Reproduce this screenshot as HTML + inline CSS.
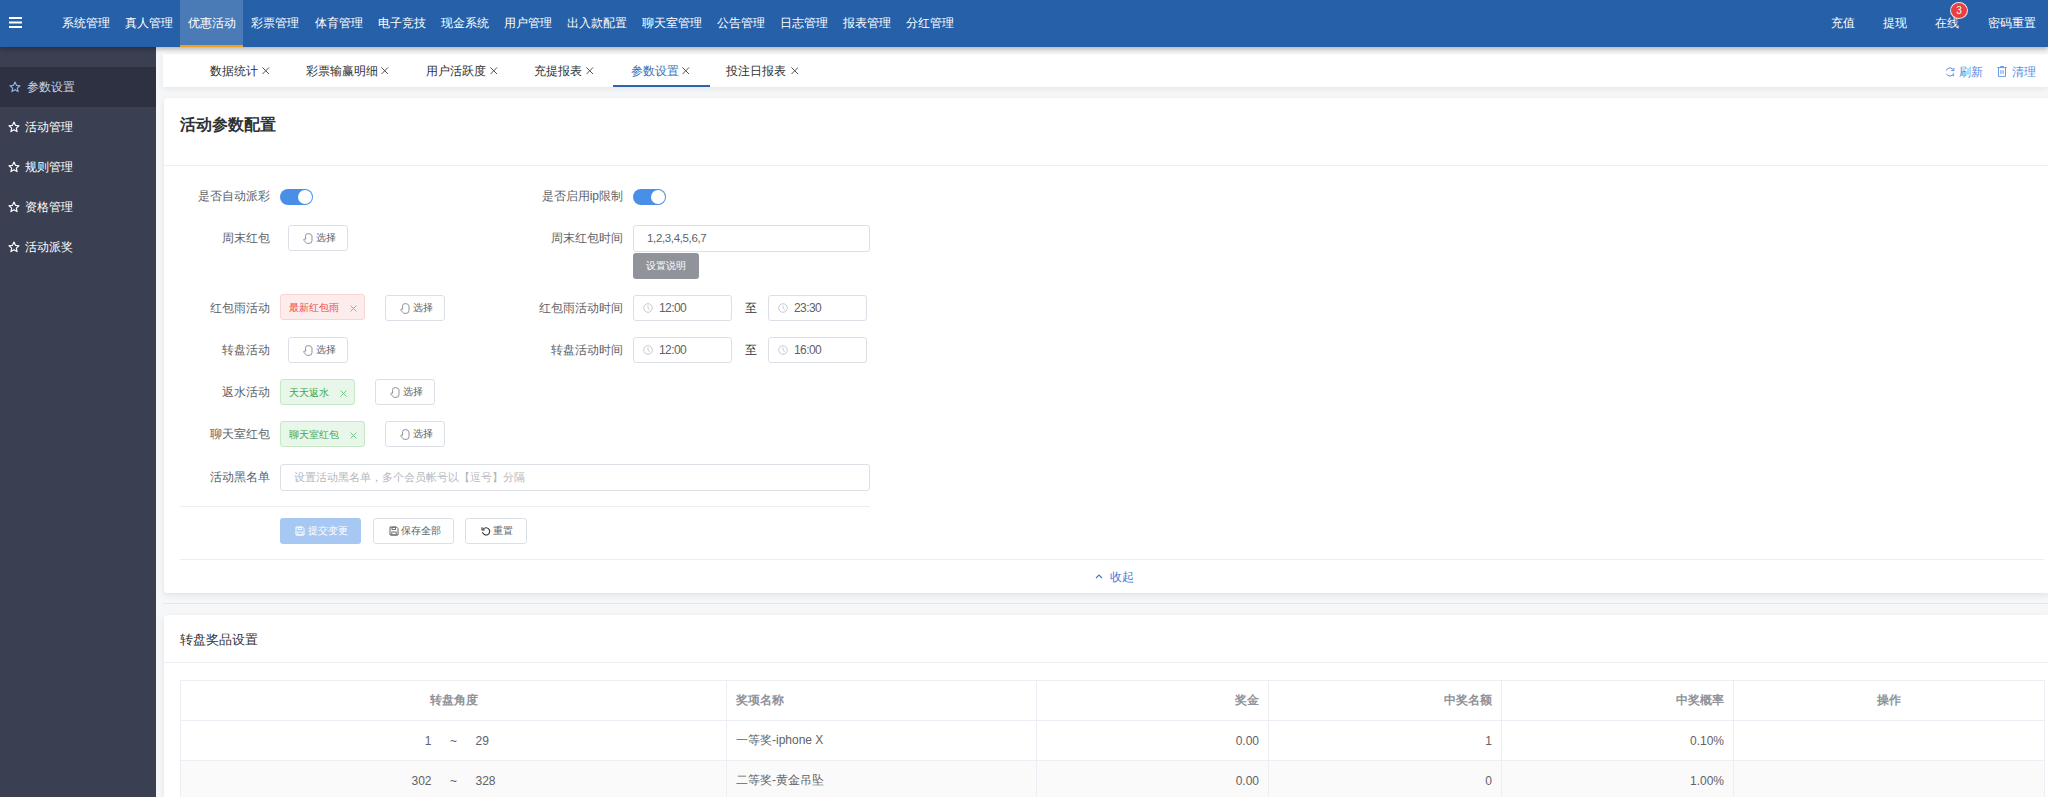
<!DOCTYPE html>
<html><head><meta charset="utf-8">
<style>
*{box-sizing:border-box;margin:0;padding:0}
i{font-style:normal;position:absolute;line-height:0}
i svg{display:block}
html,body{width:2048px;height:797px;overflow:hidden}
body{font-family:"Liberation Sans",sans-serif;font-size:12px;color:#606266;background:#f6f7f9;position:relative}
.abs{position:absolute}
#hdr{left:0;top:0;width:2048px;height:47px;background:#2660a9;box-shadow:0 2px 5px rgba(0,0,0,.3);z-index:5}
.nav{position:absolute;top:16px;line-height:14px;color:#fff;font-size:12px;white-space:nowrap}
#side{left:0;top:47px;width:156px;height:750px;background:#3a3f51;z-index:4}
.mi{position:absolute;left:0;width:156px;height:40px;color:#fff;font-size:12px}
.mi.act{background:#2d3142;color:#c8d3e6}
.mi span{position:absolute;top:13px;line-height:14px;white-space:nowrap}
#tabs{left:163px;top:54px;width:1885px;height:33px;background:#fff;box-shadow:0 2px 6px rgba(0,0,0,.07)}
.tabt{position:absolute;top:64px;line-height:14px;font-size:12px;white-space:nowrap}
.card{position:absolute;left:164px;width:1884px;background:#fff;border-radius:4px 0 0 4px;box-shadow:0 2px 6px rgba(0,0,0,.09)}
.lbl{position:absolute;color:#606266;font-size:12px;white-space:nowrap;line-height:14px}
.sw{position:absolute;width:33px;height:16px;border-radius:8px;background:#4a8fe7}
.sw:after{content:"";position:absolute;right:1px;top:1px;width:14px;height:14px;border-radius:50%;background:#fff}
.btn{position:absolute;height:26px;border:1px solid #dcdfe6;border-radius:3px;background:#fff;color:#606266;font-size:10px;line-height:24px;white-space:nowrap}
.btn span{position:absolute;top:0}
.inp{position:absolute;height:27px;border:1px solid #dcdfe6;border-radius:3px;background:#fff;color:#606266;font-size:12px;line-height:25px;white-space:nowrap}
.inp span{position:absolute;top:0;letter-spacing:-0.6px}
.tag{position:absolute;height:26px;border-radius:3px;font-size:10px;line-height:24px;white-space:nowrap}
.tag.red{background:#fdecec;border:1px solid #fbd3d3;color:#ef4a4a}
.tag.grn{background:#e9f6ea;border:1px solid #c6e8c6;color:#3ca64e}
.tag span,.tag svg{position:absolute}
.hline{position:absolute;height:1px;background:#ebeef5}
table{border-collapse:collapse;position:absolute;left:180px;top:680px;width:1865px;font-size:12px;color:#606266;table-layout:fixed}
td,th{border:1px solid #ebeef5;height:40px;padding:0 9px;white-space:nowrap}
th{font-weight:bold;color:#909399}
tr.st td{background:#fafafa}
.r1{display:inline-block;width:40px;text-align:right}
.tl{display:inline-block;width:44px;text-align:center}
.r2{display:inline-block;width:40px;text-align:left}
</style></head><body>
<div id="hdr" class="abs">
<svg class="abs" style="left:9px;top:17px" width="13" height="11" viewBox="0 0 13 11"><rect x="0" y="0" width="13" height="2" fill="#fff"/><rect x="0" y="4.5" width="13" height="2" fill="#fff"/><rect x="0" y="9" width="13" height="2" fill="#fff"/></svg>
<div class="abs" style="left:180px;top:0;width:63px;height:47px;background:#4a7bb7;border-bottom:2px solid #f0a020"></div>
<div class="nav" style="left:62.4px">系统管理</div><div class="nav" style="left:125.2px">真人管理</div><div class="nav" style="left:188.1px">优惠活动</div><div class="nav" style="left:251.4px">彩票管理</div><div class="nav" style="left:314.6px">体育管理</div><div class="nav" style="left:377.6px">电子竞技</div><div class="nav" style="left:440.8px">现金系统</div><div class="nav" style="left:503.7px">用户管理</div><div class="nav" style="left:567.1px">出入款配置</div><div class="nav" style="left:641.6px">聊天室管理</div><div class="nav" style="left:716.8px">公告管理</div><div class="nav" style="left:780.3px">日志管理</div><div class="nav" style="left:843.0px">报表管理</div><div class="nav" style="left:905.8px">分红管理</div>
<div class="nav" style="left:1831px">充值</div>
<div class="nav" style="left:1883px">提现</div>
<div class="nav" style="left:1935px">在线</div>
<div class="abs" style="left:1950px;top:2px;width:18px;height:17px;border-radius:50%;background:#e8403f;border:1px solid rgba(255,255,255,.85);color:#fff;font-size:10px;line-height:15px;text-align:center">3</div>
<div class="nav" style="left:1987.5px">密码重置</div>
</div>
<div id="side" class="abs"><div class="mi act" style="top:20px"><svg class="abs" style="left:9.3px;top:14px" width="12" height="12" viewBox="0 0 24 24"><path d="M12 2.2l2.9 6.5 7.1.7-5.4 4.8 1.6 7-6.2-3.7-6.2 3.7 1.6-7L2 9.4l7.1-.7z" fill="none" stroke="#8fb4e6" stroke-width="2.3" stroke-linejoin="round"/></svg><span style="left:27px">参数设置</span></div><div class="mi" style="top:60px"><svg class="abs" style="left:8.3px;top:14px" width="12" height="12" viewBox="0 0 24 24"><path d="M12 2.2l2.9 6.5 7.1.7-5.4 4.8 1.6 7-6.2-3.7-6.2 3.7 1.6-7L2 9.4l7.1-.7z" fill="none" stroke="#fff" stroke-width="2.3" stroke-linejoin="round"/></svg><span style="left:25px">活动管理</span></div><div class="mi" style="top:100px"><svg class="abs" style="left:8.3px;top:14px" width="12" height="12" viewBox="0 0 24 24"><path d="M12 2.2l2.9 6.5 7.1.7-5.4 4.8 1.6 7-6.2-3.7-6.2 3.7 1.6-7L2 9.4l7.1-.7z" fill="none" stroke="#fff" stroke-width="2.3" stroke-linejoin="round"/></svg><span style="left:25px">规则管理</span></div><div class="mi" style="top:140px"><svg class="abs" style="left:8.3px;top:14px" width="12" height="12" viewBox="0 0 24 24"><path d="M12 2.2l2.9 6.5 7.1.7-5.4 4.8 1.6 7-6.2-3.7-6.2 3.7 1.6-7L2 9.4l7.1-.7z" fill="none" stroke="#fff" stroke-width="2.3" stroke-linejoin="round"/></svg><span style="left:25px">资格管理</span></div><div class="mi" style="top:180px"><svg class="abs" style="left:8.3px;top:14px" width="12" height="12" viewBox="0 0 24 24"><path d="M12 2.2l2.9 6.5 7.1.7-5.4 4.8 1.6 7-6.2-3.7-6.2 3.7 1.6-7L2 9.4l7.1-.7z" fill="none" stroke="#fff" stroke-width="2.3" stroke-linejoin="round"/></svg><span style="left:25px">活动派奖</span></div></div>
<div id="tabs" class="abs"></div>
<div class="tabt" style="left:209.7px;color:#303133">数据统计</div><svg class="abs" style="left:262px;top:66.5px" width="7.5" height="7.5" viewBox="0 0 8 8"><path d="M0.4 0.4L7.6 7.6M7.6 0.4L0.4 7.6" stroke="#444" stroke-width="1"/></svg><div class="tabt" style="left:305.6px;color:#303133">彩票输赢明细</div><svg class="abs" style="left:381.4px;top:66.5px" width="7.5" height="7.5" viewBox="0 0 8 8"><path d="M0.4 0.4L7.6 7.6M7.6 0.4L0.4 7.6" stroke="#444" stroke-width="1"/></svg><div class="tabt" style="left:425.6px;color:#303133">用户活跃度</div><svg class="abs" style="left:490px;top:66.5px" width="7.5" height="7.5" viewBox="0 0 8 8"><path d="M0.4 0.4L7.6 7.6M7.6 0.4L0.4 7.6" stroke="#444" stroke-width="1"/></svg><div class="tabt" style="left:533.8px;color:#303133">充提报表</div><svg class="abs" style="left:586px;top:66.5px" width="7.5" height="7.5" viewBox="0 0 8 8"><path d="M0.4 0.4L7.6 7.6M7.6 0.4L0.4 7.6" stroke="#444" stroke-width="1"/></svg><div class="tabt" style="left:630.6px;color:#3b6fb6">参数设置</div><svg class="abs" style="left:682.2px;top:66.5px" width="7.5" height="7.5" viewBox="0 0 8 8"><path d="M0.4 0.4L7.6 7.6M7.6 0.4L0.4 7.6" stroke="#444" stroke-width="1"/></svg><div class="tabt" style="left:726.2px;color:#303133">投注日报表</div><svg class="abs" style="left:790.7px;top:66.5px" width="7.5" height="7.5" viewBox="0 0 8 8"><path d="M0.4 0.4L7.6 7.6M7.6 0.4L0.4 7.6" stroke="#444" stroke-width="1"/></svg><div class="abs" style="left:613px;top:85px;width:97px;height:2px;background:#2e63ad"></div>
<div class="abs" style="left:1944px;top:65px;color:#5a8de6;font-size:12px;line-height:14px;white-space:nowrap"><svg class="abs" style="left:1px;top:1.5px" width="10" height="10" viewBox="0 0 10 10"><path d="M1.2 3.6A4 4 0 0 1 8.6 3.2M8.8 6.2A4 4 0 0 1 1.4 6.8" fill="none" stroke="#5a8de6" stroke-width="1"/><path d="M8.9 0.9V3.6H6.2" fill="none" stroke="#5a8de6" stroke-width="1"/><path d="M7.2 8.6L9.3 7.6L9 9.6Z" fill="#5a8de6"/></svg><span class="abs" style="left:15px;top:0">刷新</span>
<svg class="abs" style="left:53px;top:1px" width="10" height="11" viewBox="0 0 10 11"><path d="M0.3 1.6H9.7M3.6 1.6V0.5H6.4V1.6M1.5 1.6V10.4H8.5V1.6M3.9 4V8M6.1 4V8" fill="none" stroke="#5a8de6" stroke-width="0.9"/></svg><span class="abs" style="left:68px;top:0">清理</span></div>

<div class="card" style="top:98px;height:495px"></div>
<div class="abs" style="left:180px;top:116px;font-size:16px;font-weight:bold;color:#303133;line-height:18px;white-space:nowrap">活动参数配置</div>
<div class="hline" style="left:163px;top:165px;width:1885px"></div>
<div class="lbl" style="right:1778px;top:189px">是否自动派彩</div><div class="sw" style="left:280px;top:189px"></div><div class="lbl" style="right:1425px;top:189px">是否启用ip限制</div><div class="sw" style="left:633px;top:189px"></div><div class="lbl" style="right:1778px;top:231px">周末红包</div><div class="btn" style="left:288px;top:225px;width:60px"><i style="left:14px;top:7px"><svg width="10" height="11" viewBox="0 0 10 11"><path d="M2.6 6.2V2.6Q2.6 0.6 5.2 0.6Q8.7 0.6 9 2.9V7.6Q9 10.4 6 10.4H4.9Q3.6 10.4 2.7 9.4L0.9 7.3Q0.4 6.5 1.1 6.1Q1.8 5.8 2.6 6.7" fill="none" stroke="#8a8c90" stroke-width="0.95" stroke-linejoin="round"/></svg></i><span style="left:27px">选择</span></div><div class="lbl" style="right:1425px;top:231px">周末红包时间</div><div class="inp" style="left:633px;top:225px;width:237px"><span style="left:13px;font-size:11.5px;letter-spacing:-0.35px">1,2,3,4,5,6,7</span></div><div class="abs" style="left:633px;top:253px;width:66px;height:26px;background:#909399;border-radius:3px;color:#fff;font-size:10px;line-height:26px;text-align:center">设置说明</div><div class="lbl" style="right:1778px;top:301px">红包雨活动</div><div class="tag red" style="left:280px;top:294px;width:85px"><span style="left:8px;top:1px">最新红包雨</span><svg style="left:69px;top:9.5px" width="7" height="7" viewBox="0 0 7 7"><path d="M0.5 0.5L6.5 6.5M6.5 0.5L0.5 6.5" stroke="#f47a7a" stroke-width="0.9"/></svg></div><div class="btn" style="left:385px;top:295px;width:60px"><i style="left:14px;top:7px"><svg width="10" height="11" viewBox="0 0 10 11"><path d="M2.6 6.2V2.6Q2.6 0.6 5.2 0.6Q8.7 0.6 9 2.9V7.6Q9 10.4 6 10.4H4.9Q3.6 10.4 2.7 9.4L0.9 7.3Q0.4 6.5 1.1 6.1Q1.8 5.8 2.6 6.7" fill="none" stroke="#8a8c90" stroke-width="0.95" stroke-linejoin="round"/></svg></i><span style="left:27px">选择</span></div><div class="lbl" style="right:1425px;top:301px">红包雨活动时间</div><div class="inp" style="left:633px;top:295px;width:99px;height:26px"><i style="left:9px;top:7px"><svg width="10" height="10" viewBox="0 0 10 10"><circle cx="5" cy="5" r="4.3" fill="none" stroke="#c0c4cc" stroke-width="0.9"/><path d="M5 2.4V5.2L6.8 6.8" fill="none" stroke="#c0c4cc" stroke-width="0.9"/></svg></i><span style="left:25px">12:00</span></div><div class="lbl" style="left:745px;top:301px;color:#303133">至</div><div class="inp" style="left:768px;top:295px;width:99px;height:26px"><i style="left:9px;top:7px"><svg width="10" height="10" viewBox="0 0 10 10"><circle cx="5" cy="5" r="4.3" fill="none" stroke="#c0c4cc" stroke-width="0.9"/><path d="M5 2.4V5.2L6.8 6.8" fill="none" stroke="#c0c4cc" stroke-width="0.9"/></svg></i><span style="left:25px">23:30</span></div><div class="lbl" style="right:1778px;top:343px">转盘活动</div><div class="btn" style="left:288px;top:337px;width:60px"><i style="left:14px;top:7px"><svg width="10" height="11" viewBox="0 0 10 11"><path d="M2.6 6.2V2.6Q2.6 0.6 5.2 0.6Q8.7 0.6 9 2.9V7.6Q9 10.4 6 10.4H4.9Q3.6 10.4 2.7 9.4L0.9 7.3Q0.4 6.5 1.1 6.1Q1.8 5.8 2.6 6.7" fill="none" stroke="#8a8c90" stroke-width="0.95" stroke-linejoin="round"/></svg></i><span style="left:27px">选择</span></div><div class="lbl" style="right:1425px;top:343px">转盘活动时间</div><div class="inp" style="left:633px;top:337px;width:99px;height:26px"><i style="left:9px;top:7px"><svg width="10" height="10" viewBox="0 0 10 10"><circle cx="5" cy="5" r="4.3" fill="none" stroke="#c0c4cc" stroke-width="0.9"/><path d="M5 2.4V5.2L6.8 6.8" fill="none" stroke="#c0c4cc" stroke-width="0.9"/></svg></i><span style="left:25px">12:00</span></div><div class="lbl" style="left:745px;top:343px;color:#303133">至</div><div class="inp" style="left:768px;top:337px;width:99px;height:26px"><i style="left:9px;top:7px"><svg width="10" height="10" viewBox="0 0 10 10"><circle cx="5" cy="5" r="4.3" fill="none" stroke="#c0c4cc" stroke-width="0.9"/><path d="M5 2.4V5.2L6.8 6.8" fill="none" stroke="#c0c4cc" stroke-width="0.9"/></svg></i><span style="left:25px">16:00</span></div><div class="lbl" style="right:1778px;top:385px">返水活动</div><div class="tag grn" style="left:280px;top:379px;width:75px"><span style="left:8px;top:1px">天天返水</span><svg style="left:59px;top:9.5px" width="7" height="7" viewBox="0 0 7 7"><path d="M0.5 0.5L6.5 6.5M6.5 0.5L0.5 6.5" stroke="#6cc07a" stroke-width="0.9"/></svg></div><div class="btn" style="left:375px;top:379px;width:60px"><i style="left:14px;top:7px"><svg width="10" height="11" viewBox="0 0 10 11"><path d="M2.6 6.2V2.6Q2.6 0.6 5.2 0.6Q8.7 0.6 9 2.9V7.6Q9 10.4 6 10.4H4.9Q3.6 10.4 2.7 9.4L0.9 7.3Q0.4 6.5 1.1 6.1Q1.8 5.8 2.6 6.7" fill="none" stroke="#8a8c90" stroke-width="0.95" stroke-linejoin="round"/></svg></i><span style="left:27px">选择</span></div><div class="lbl" style="right:1778px;top:427px">聊天室红包</div><div class="tag grn" style="left:280px;top:421px;width:85px"><span style="left:8px;top:1px">聊天室红包</span><svg style="left:69px;top:9.5px" width="7" height="7" viewBox="0 0 7 7"><path d="M0.5 0.5L6.5 6.5M6.5 0.5L0.5 6.5" stroke="#6cc07a" stroke-width="0.9"/></svg></div><div class="btn" style="left:385px;top:421px;width:60px"><i style="left:14px;top:7px"><svg width="10" height="11" viewBox="0 0 10 11"><path d="M2.6 6.2V2.6Q2.6 0.6 5.2 0.6Q8.7 0.6 9 2.9V7.6Q9 10.4 6 10.4H4.9Q3.6 10.4 2.7 9.4L0.9 7.3Q0.4 6.5 1.1 6.1Q1.8 5.8 2.6 6.7" fill="none" stroke="#8a8c90" stroke-width="0.95" stroke-linejoin="round"/></svg></i><span style="left:27px">选择</span></div><div class="lbl" style="right:1778px;top:470px">活动黑名单</div><div class="inp" style="left:280px;top:464px;width:590px"><span style="left:13px;color:#b4b7bd;font-size:11px;letter-spacing:0">设置活动黑名单，多个会员帐号以【逗号】分隔</span></div><div class="hline" style="left:180px;top:506px;width:690px"></div><div class="abs" style="left:280px;top:518px;width:81px;height:26px;background:#a6c8f3;border-radius:3px;color:#fff;font-size:10px;line-height:26px"><i class="abs" style="left:15px;top:8px"><svg width="10" height="10" viewBox="0 0 10 10"><path d="M1 1H7.5L9 2.5V9H1Z" fill="none" stroke="#fff" stroke-width="1"/><rect x="3" y="1.2" width="3.5" height="2.3" fill="none" stroke="#fff" stroke-width="0.9"/><rect x="2.8" y="6" width="4.4" height="3" fill="none" stroke="#fff" stroke-width="0.9"/></svg></i><span class="abs" style="left:28px">提交变更</span></div><div class="btn" style="left:373px;top:518px;width:81px"><i style="left:15px;top:7px"><svg width="10" height="10" viewBox="0 0 10 10"><path d="M1 1H7.5L9 2.5V9H1Z" fill="none" stroke="#606266" stroke-width="1"/><rect x="3" y="1.2" width="3.5" height="2.3" fill="none" stroke="#606266" stroke-width="0.9"/><rect x="2.8" y="6" width="4.4" height="3" fill="none" stroke="#606266" stroke-width="0.9"/></svg></i><span style="left:27px">保存全部</span></div><div class="btn" style="left:465px;top:518px;width:62px"><i style="left:15px;top:7px"><svg width="10" height="10" viewBox="0 0 10 10"><path d="M2.2 3.2A3.6 3.6 0 1 1 1.5 6" fill="none" stroke="#303133" stroke-width="1.1"/><path d="M1 1.2V4H3.8" fill="none" stroke="#303133" stroke-width="1.1"/></svg></i><span style="left:27px">重置</span></div><div class="hline" style="left:180px;top:559px;width:1864px"></div><div class="abs" style="left:1095px;top:570px;color:#3a7bd5;font-size:12px;line-height:14px"><svg class="abs" style="left:0;top:3px" width="8" height="6" viewBox="0 0 8 6"><path d="M1 5L4 2L7 5" fill="none" stroke="#3a7bd5" stroke-width="1.1"/></svg><span class="abs" style="left:15px;white-space:nowrap">收起</span></div>
<div class="abs" style="left:163px;top:603px;width:1885px;height:1px;background:#e4e7ed"></div>
<div class="card" style="top:615px;height:182px;border-radius:4px 0 0 0"></div>
<div class="abs" style="left:180px;top:632px;font-size:13px;color:#303133;line-height:15px;white-space:nowrap">转盘奖品设置</div>
<div class="hline" style="left:163px;top:662px;width:1885px"></div>
<table>
<colgroup><col style="width:546px"><col style="width:310px"><col style="width:232px"><col style="width:233px"><col style="width:232px"><col style="width:311px"></colgroup>
<tr><th style="text-align:center">转盘角度</th><th style="text-align:left">奖项名称</th><th style="text-align:right">奖金</th><th style="text-align:right">中奖名额</th><th style="text-align:right">中奖概率</th><th style="text-align:center">操作</th></tr>
<tr><td style="text-align:center"><span class="r1">1</span><span class="tl">~</span><span class="r2">29</span></td><td>一等奖-iphone X</td><td style="text-align:right">0.00</td><td style="text-align:right">1</td><td style="text-align:right">0.10%</td><td></td></tr>
<tr class="st"><td style="text-align:center"><span class="r1">302</span><span class="tl">~</span><span class="r2">328</span></td><td>二等奖-黄金吊坠</td><td style="text-align:right">0.00</td><td style="text-align:right">0</td><td style="text-align:right">1.00%</td><td></td></tr>
</table>
</body></html>
